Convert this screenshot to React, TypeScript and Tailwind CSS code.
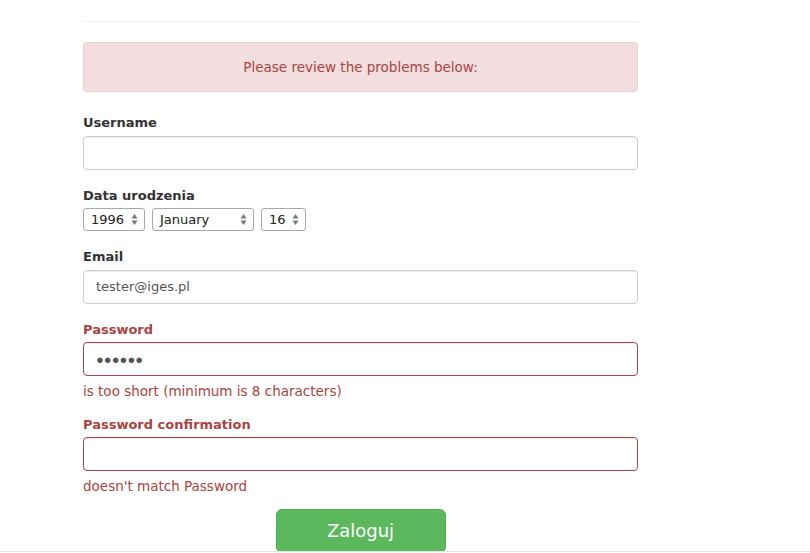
import React from 'react';

const font = "font-['DejaVu_Sans',Verdana,sans-serif]";

function Arrows() {
  return (
    <svg width="7" height="13" viewBox="0 0 7 13" className="shrink-0">
      <path d="M3.5 1 L6.5 5.5 L0.5 5.5 Z" fill="#777" />
      <path d="M3.5 12 L6.5 7.5 L0.5 7.5 Z" fill="#777" />
    </svg>
  );
}

function FakeSelect({ value, width }: { value: string; width: string }) {
  return (
    <div
      className={`${width} h-[23px] flex items-center justify-between pl-[7px] pr-[6px] border border-[#a9a9a9] rounded-[3px] bg-white text-[13px] text-[#222]`}
    >
      <span>{value}</span>
      <Arrows />
    </div>
  );
}

const inputBase =
  'block w-full h-[34px] px-[12px] rounded-[4px] border bg-white text-[13px] text-[#555] outline-none shadow-[inset_0_1px_1px_rgba(0,0,0,0.075)]';
const labelBase = 'block pt-[2px] mb-[3px] leading-[18.57px] text-[13px] font-bold';
const helpBase = 'mt-[5px] h-[17.5px] pt-[2.5px] leading-[15px] text-[13.5px] text-[#a94442]';

export default function App() {
  return (
    <div className={`${font} bg-white h-[553px] overflow-hidden flex flex-col`}>
      <div className="h-[552px] border-b border-[#e5e5e5] overflow-hidden">
        <div className="ml-[83px] w-[555px]">
          <div className="h-[22px] border-b border-[#eeeeee]" />

          {/* error summary */}
          <div className="mt-[20px] h-[50px] flex items-center justify-center rounded-[4px] border border-[#ebccd1] bg-[#f2dede] text-[13.5px] text-[#a94442]">
            Please review the problems below:
          </div>

          <form className="mt-[20px]">
            <div className="mb-[15px]">
              <label className={`${labelBase} text-[#333]`}>Username</label>
              <input type="text" readOnly className={`${inputBase} border-[#cccccc]`} />
            </div>

            <div className="mb-[15px]">
              <label className={`${labelBase} text-[#333]`}>Data urodzenia</label>
              <div className="flex gap-[7px]">
                <FakeSelect value="1996" width="w-[62px]" />
                <FakeSelect value="January" width="w-[102px]" />
                <FakeSelect value="16" width="w-[45px]" />
              </div>
            </div>

            <div className="mb-[15px]">
              <label className={`${labelBase} text-[#333]`}>Email</label>
              <input type="text" readOnly value="tester@iges.pl" className={`${inputBase} border-[#cccccc]`} />
            </div>

            <div className="mb-[15px]">
              <label className={`${labelBase} text-[#a94442]`}>Password</label>
              <input
                type="text"
                readOnly
                value="●●●●●●"
                className={`${inputBase} border-[#a94442] font-['Liberation_Sans',Arial,sans-serif]`}
              />
              <p className={helpBase}>is too short (minimum is 8 characters)</p>
            </div>

            <div className="mb-[15px]">
              <label className={`${labelBase} text-[#a94442]`}>Password confirmation</label>
              <input type="password" readOnly className={`${inputBase} border-[#a94442]`} />
              <p className={helpBase}>doesn't match Password</p>
            </div>

            <div className="flex justify-center">
              <button
                type="button"
                className="w-[170px] h-[44px] rounded-[6px] border border-[#4cae4c] bg-[#5cb85c] text-[18px] text-white"
              >
                Zaloguj
              </button>
            </div>
          </form>
        </div>
      </div>
    </div>
  );
}
